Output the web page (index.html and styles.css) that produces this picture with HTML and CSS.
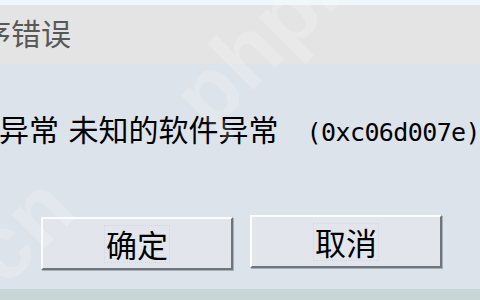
FILE: index.html
```html
<!DOCTYPE html>
<html>
<head>
<meta charset="utf-8">
<link rel="stylesheet" href="styles.css">
</head>
<body>
<div class="dialog">
  <div class="topline"></div>
  <div class="titlebar"><span class="title">程序错误</span></div>
  <div class="content">
    <div class="message"><span class="cn">程序异常</span><span class="gap"></span><span class="cn">未知的软件异常</span><span class="gap2"></span><span class="code">(0xc06d007e)</span></div>
    <div class="buttons">
      <div class="btn btn-ok"><span class="label">确定</span></div>
      <div class="btn btn-cancel"><span class="label">取消</span></div>
    </div>
  </div>
  <div class="bottomstrip"></div>
  <div class="watermark wm1">php.cn</div>
  <div class="watermark wm2">cn</div>
</div>
</body>
</html>
```
FILE: styles.css
```css
html, body {
  margin: 0;
  padding: 0;
  width: 480px;
  height: 300px;
  overflow: hidden;
  background: #dde3eb;
}
.dialog {
  position: relative;
  width: 480px;
  height: 300px;
  display: flex;
  flex-direction: column;
  overflow: hidden;
  font-family: "Noto Sans CJK SC", "Liberation Sans", sans-serif;
}
.topline {
  height: 5px;
  background: #eef7f9;
  border-bottom: 1px solid #e0e6e6;
}
.titlebar {
  height: 58px;
  background: #e4e4e4;
  display: flex;
  align-items: center;
  overflow: hidden;
  white-space: nowrap;
}
.title {
  margin-left: -49px;
  font-size: 30px;
  color: #585858;
  line-height: 34px;
  margin-top: -6px;
}
.content {
  flex: 1;
  background: #dde3eb;
  display: flex;
  flex-direction: column;
  overflow: hidden;
}
.message {
  margin-top: 46px;
  margin-left: -61px;
  white-space: nowrap;
  display: flex;
  align-items: baseline;
  color: #000;
  line-height: 36px;
}
.cn {
  font-size: 30px;
}
.gap { width: 11px; }
.gap2 { width: 32px; }
.code {
  font-family: "DejaVu Sans Mono", "Liberation Mono", monospace;
  font-size: 25px;
  letter-spacing: -0.6px;
}
.buttons {
  margin-top: 66px;
  display: flex;
  gap: 17px;
  padding-left: 41px;
  align-items: flex-start;
}
.btn {
  box-sizing: border-box;
  width: 192px;
  height: 53px;
  background: #e2e6ec;
  border-top: 2px solid #fbfcfd;
  border-left: 2px solid #fbfcfd;
  border-right: 2px solid #6e757d;
  border-bottom: 2px solid #6e757d;
  box-shadow: 1px 1px 0 #a9b0b8;
  display: flex;
  align-items: center;
  justify-content: center;
}
.btn-cancel {
  margin-top: -2px;
}
.label {
  font-size: 31px;
  line-height: 34px;
  color: #000;
  outline: 1px dotted #d3d8de;
  outline-offset: 1px;
}
.bottomstrip {
  height: 11px;
  background: #c9d6d6;
}
.watermark {
  position: absolute;
  font-family: "Liberation Sans", sans-serif;
  font-weight: bold;
  color: rgba(255, 255, 255, 0.18);
  white-space: nowrap;
  transform: rotate(-45deg);
  transform-origin: left bottom;
}
.wm1 {
  left: 225px;
  top: 45px;
  font-size: 90px;
}
.wm2 {
  left: 20px;
  top: 200px;
  font-size: 90px;
}
```
